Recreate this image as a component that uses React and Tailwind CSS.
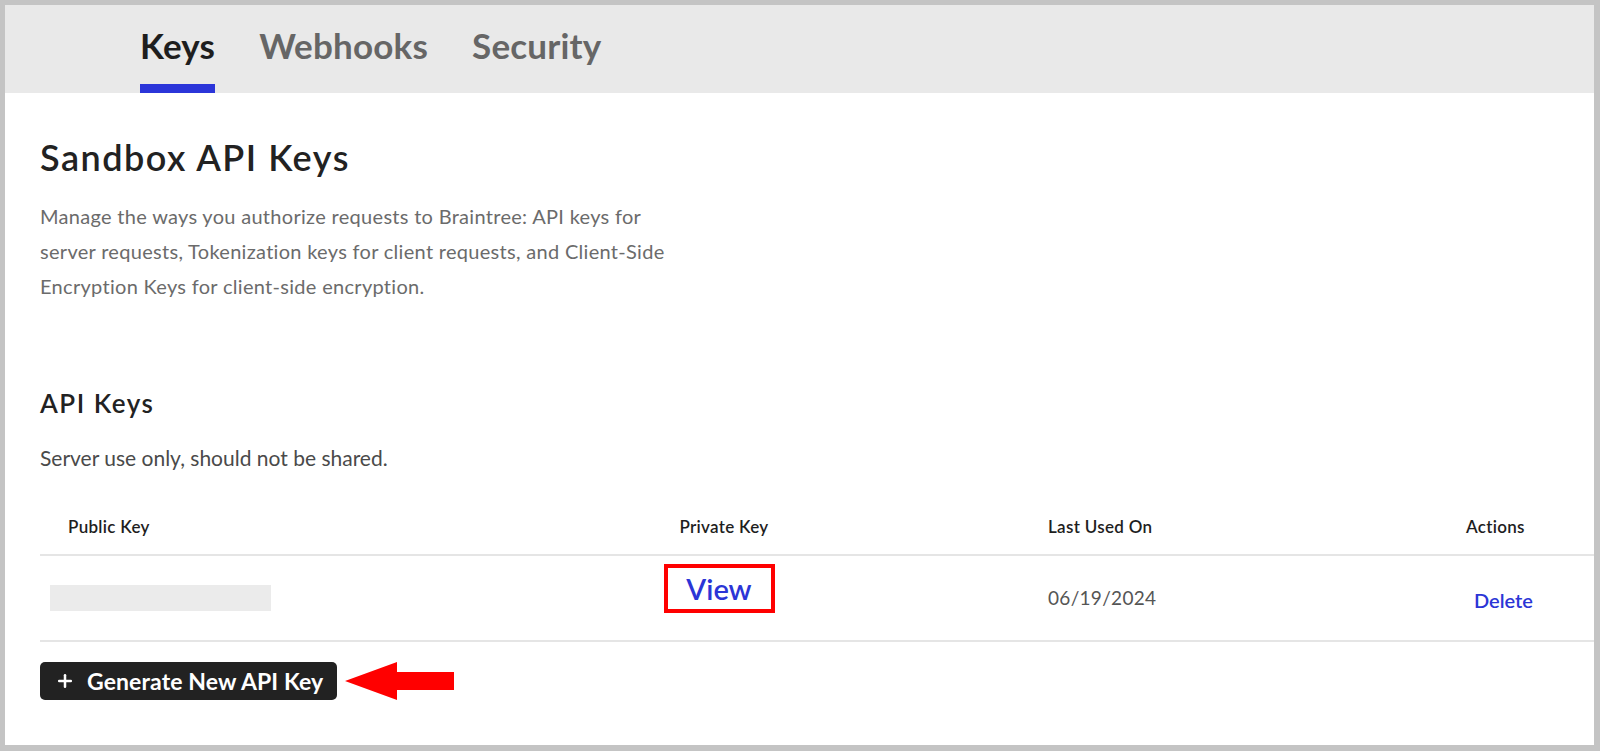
import { Plus } from 'lucide-react'

const tabs = [
    { label: 'Keys', active: true },
    { label: 'Webhooks' },
    { label: 'Security' },
]

const Arrow = () => (
    <svg width="109" height="38" viewBox="0 0 109 38" className="ml-2 shrink-0">
        <polygon points="0,19 52,0 52,10 109,10 109,28 52,28 52,38" fill="#ff0000" />
    </svg>
)

export default function App() {
    return (
        <div
            className="w-[1600px] h-[751px] bg-[#c4c4c4] pt-[5px] pl-[5px] pr-[6px] pb-[6px]"
            style={{ fontFamily: 'Lato, "Open Sans", sans-serif' }}
        >
            <div className="h-full bg-white flex flex-col">
                {/* tab bar */}
                <div className="h-[88px] bg-[#e9e9e9] flex items-end pl-[135px] gap-[44px] shrink-0">
                    {tabs.map((t) => (
                        <div key={t.label} className="flex flex-col">
                            <span
                                className={`text-[35px] font-bold leading-[40px] tracking-[0.2px] ${t.active ? 'text-[#1e1e1e]' : 'text-[#666666]'}`}
                            >
                                {t.label}
                            </span>
                            <div className={`h-[9px] mt-[19px] ${t.active ? 'bg-[#2b35d9]' : 'bg-transparent'}`} />
                        </div>
                    ))}
                </div>

                <div className="pl-[35px] flex flex-col">
                    <h1 className="mt-[44px] text-[36px] leading-[40px] font-semibold tracking-[1.5px] text-[#222222]">
                        Sandbox API Keys
                    </h1>
                    <p className="mt-[22px] w-[640px] text-[20px] leading-[35px] tracking-[0.3px] text-[#6b6b6b]">
                        Manage the ways you authorize requests to Braintree: API keys for server requests, Tokenization keys
                        for client requests, and Client-Side Encryption Keys for client-side encryption.
                    </p>

                    <h2 className="mt-[84px] text-[26px] leading-[30px] font-semibold tracking-[1.5px] text-[#222222]">
                        API Keys
                    </h2>
                    <p className="mt-[28px] text-[21px] leading-[24px] text-[#4a4a4a]">
                        Server use only, should not be shared.
                    </p>

                    {/* table */}
                    <div className="mt-[29px]">
                        <div className="grid grid-cols-[584px_200px_624px_1fr] h-[57px] items-center border-b-2 border-[#e5e5e5] text-[17px] leading-[20px] font-semibold tracking-[0.3px] text-[#1e1e1e]">
                            <div className="pl-[28px]">Public Key</div>
                            <div className="text-center">Private Key</div>
                            <div className="pl-[224px]">Last Used On</div>
                            <div className="pl-[18px]">Actions</div>
                        </div>
                        <div className="grid grid-cols-[584px_200px_624px_1fr] h-[86px] items-center border-b-2 border-[#e5e5e5]">
                            <div className="pl-[10px]">
                                <div className="w-[221px] h-[26px] bg-[#ebebeb]" />
                            </div>
                            <div className="flex justify-center self-start pt-[8px] pr-[10px]">
                                <div className="w-[111px] h-[49px] border-4 border-[#ff0000] flex items-center justify-center text-[29px] font-semibold text-[#2b35d6]">
                                    View
                                </div>
                            </div>
                            <div className="pl-[224px] text-[19px] leading-[24px] tracking-[0.3px] text-[#555555]">
                                06/19/2024
                            </div>
                            <div className="pl-[26px] pt-[3px] text-[20px] leading-[24px] font-semibold text-[#2b35d6]">
                                Delete
                            </div>
                        </div>
                    </div>

                    <div className="mt-[20px] flex items-center">
                        <button className="h-[38px] w-[297px] rounded-[5px] bg-[#222222] text-white flex items-center pl-[15px] gap-[12px]">
                            <Plus size={20} strokeWidth={3} />
                            <span className="text-[23px] font-bold leading-[26px] tracking-[0.1px]">Generate New API Key</span>
                        </button>
                        <Arrow />
                    </div>
                </div>
            </div>
        </div>
    )
}
